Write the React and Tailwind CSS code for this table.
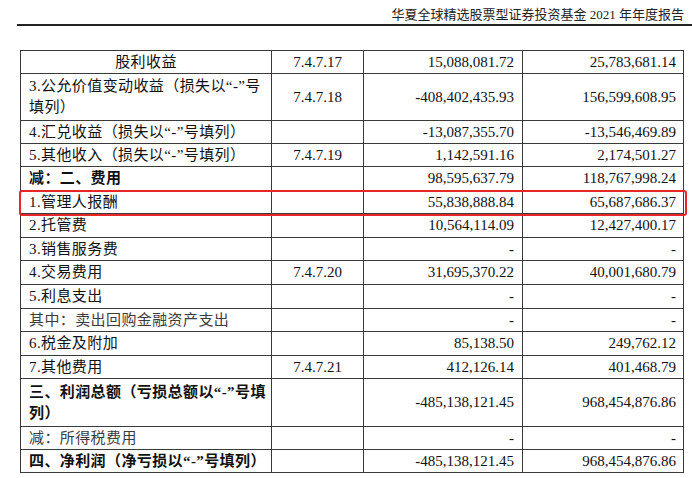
const rows = [
  { h: 'h-[23px]', label: '股利收益', center: true, note: '7.4.7.17', a: '15,088,081.72', b: '25,783,681.14' },
  { h: 'h-[47px]', label: ['3.公允价值变动收益（损失以“-”号', '填列）'], note: '7.4.7.18', a: '-408,402,435.93', b: '156,599,608.95' },
  { h: 'h-[23px]', label: '4.汇兑收益（损失以“-”号填列）', note: '', a: '-13,087,355.70', b: '-13,546,469.89' },
  { h: 'h-[23px]', label: '5.其他收入（损失以“-”号填列）', note: '7.4.7.19', a: '1,142,591.16', b: '2,174,501.27' },
  { h: 'h-[24px]', label: '减：二、费用', bold: true, note: '', a: '98,595,637.79', b: '118,767,998.24' },
  { h: 'h-[23px]', label: '1.管理人报酬', note: '', a: '55,838,888.84', b: '65,687,686.37' },
  { h: 'h-[24px]', label: '2.托管费', note: '', a: '10,564,114.09', b: '12,427,400.17' },
  { h: 'h-[23px]', label: '3.销售服务费', note: '', a: '-', b: '-' },
  { h: 'h-[24px]', label: '4.交易费用', note: '7.4.7.20', a: '31,695,370.22', b: '40,001,680.79' },
  { h: 'h-[24px]', label: '5.利息支出', note: '', a: '-', b: '-' },
  { h: 'h-[23px]', label: '其中：卖出回购金融资产支出', muted: true, note: '', a: '-', b: '-' },
  { h: 'h-[24px]', label: '6.税金及附加', note: '', a: '85,138.50', b: '249,762.12' },
  { h: 'h-[23px]', label: '7.其他费用', note: '7.4.7.21', a: '412,126.14', b: '401,468.79' },
  { h: 'h-[48px]', label: ['三、利润总额（亏损总额以“-”号填', '列）'], bold: true, note: '', a: '-485,138,121.45', b: '968,454,876.86' },
  { h: 'h-[23px]', label: '减：所得税费用', muted: true, note: '', a: '-', b: '-' },
  { h: 'h-[23px]', label: '四、净利润（净亏损以“-”号填列）', bold: true, note: '', a: '-485,138,121.45', b: '968,454,876.86' },
]

const serif = "font-['Liberation_Serif','Noto_Sans_CJK_SC',serif]"

function Row({ row }) {
  const cell = `${row.h} border-r border-b border-[#3a3a3a] flex items-center`
  return (
    <>
      <div
        className={`${cell} px-2 leading-[21px] tracking-[0.4px] whitespace-nowrap ${row.center ? 'justify-center' : ''} ${row.bold ? 'font-bold' : ''} ${row.muted ? 'text-[#3c3c3c]' : 'text-[#111]'}`}
      >
        {Array.isArray(row.label) ? (
          <span>
            {row.label[0]}
            <br />
            {row.label[1]}
          </span>
        ) : (
          <span>{row.label}</span>
        )}
      </div>
      <div className={`${cell} justify-center text-[#111]`}>{row.note}</div>
      <div className={`${cell} justify-end pr-2 text-[#111]`}>{row.a}</div>
      <div className={`${cell} justify-end pr-[7px] text-[#111]`}>{row.b}</div>
    </>
  )
}

export default function App() {
  return (
    <div className={`relative w-[692px] h-[478px] bg-white overflow-hidden ${serif}`}>
      {/* Page header */}
      <div className="flex justify-end pr-2 pt-[7px] h-[24px] text-[13px] leading-[16px] text-[#222]">
        华夏全球精选股票型证券投资基金 2021 年年度报告
      </div>
      <div className="ml-[17px] border-b-2 border-[#222]" />

      {/* Statement table */}
      <div className="mt-[24px] ml-[20px] w-[664px] grid grid-cols-[251px_92px_159px_161px] border-l border-t border-[#3a3a3a] text-[15px]">
        {rows.map((row, i) => (
          <Row key={i} row={row} />
        ))}
      </div>

      {/* Highlight box */}
      <div className="absolute left-[19px] top-[190px] w-[668px] h-[26px] border-2 border-[#e8262a] rounded-[3px]" />
    </div>
  )
}
